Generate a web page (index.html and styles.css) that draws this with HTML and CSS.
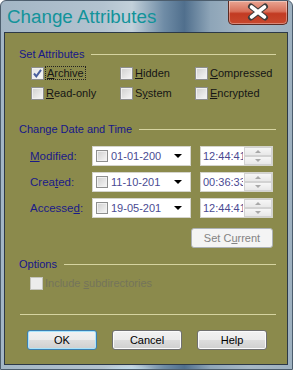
FILE: index.html
```html
<!DOCTYPE html>
<html lang="en">
<head>
<meta charset="UTF-8" />
<title>Change Attributes</title>
<link rel="stylesheet" href="styles.css">
</head>
<body>

<div class="window">
  <!-- Title bar -->
  <div class="titlebar">
    <span class="title">Change Attributes</span>
    <button class="close" aria-label="Close">
      <svg width="60" height="24" viewBox="0 0 60 24">
        <path d="M23 6.5 L37 17.5 M37 6.5 L23 17.5" stroke="#3d3d3d" stroke-width="6" stroke-linecap="round" fill="none"/>
        <path d="M23.5 7 L36.5 17 M36.5 7 L23.5 17" stroke="#fff" stroke-width="3.6" stroke-linecap="round" fill="none"/>
      </svg>
    </button>
  </div>

  <div class="client">
    <!-- Set Attributes -->
    <div class="group-head"><span>Set Attributes</span><i></i></div>
    <div class="attrs">
      <label class="check"><span class="box checked"><svg width="11" height="11" viewBox="0 0 11 11"><path d="M2 5.5 L4.3 8.3 L9 1.8" stroke="#4a5f9e" stroke-width="2" fill="none"/></svg></span><span class="focus"><u>A</u>rchive</span></label>
      <label class="check"><span class="box"></span><span><u>H</u>idden</span></label>
      <label class="check"><span class="box"></span><span><u>C</u>ompressed</span></label>
      <label class="check"><span class="box"></span><span><u>R</u>ead-only</span></label>
      <label class="check"><span class="box"></span><span>S<u>y</u>stem</span></label>
      <label class="check"><span class="box"></span><span><u>E</u>ncrypted</span></label>
    </div>

    <!-- Change Date and Time -->
    <div class="group-head head-dates"><span>Change Date and Time</span><i></i></div>
    <div class="dates">
      <div class="date-row">
        <span class="date-label"><u>M</u>odified:</span>
        <div class="picker"><span class="box small"></span><span class="val">01-01-200</span><span class="arrow"></span></div>
        <div class="timebox"><span class="val">12:44:41</span><span class="spin"><b class="up"></b><b class="down"></b></span></div>
      </div>
      <div class="date-row">
        <span class="date-label">Crea<u>t</u>ed:</span>
        <div class="picker"><span class="box small"></span><span class="val">11-10-201</span><span class="arrow"></span></div>
        <div class="timebox"><span class="val">00:36:33</span><span class="spin"><b class="up"></b><b class="down"></b></span></div>
      </div>
      <div class="date-row">
        <span class="date-label">Accesse<u>d</u>:</span>
        <div class="picker"><span class="box small"></span><span class="val">19-05-201</span><span class="arrow"></span></div>
        <div class="timebox"><span class="val">12:44:41</span><span class="spin"><b class="up"></b><b class="down"></b></span></div>
      </div>
    </div>
    <div class="set-row">
      <button class="btn disabled" disabled>Set C<u>u</u>rrent</button>
    </div>

    <!-- Options -->
    <div class="group-head head-options"><span>Options</span><i></i></div>
    <label class="check include"><span class="box dim"></span><span>Include <u>s</u>ubdirectories</span></label>

    <div class="sep"></div>

    <div class="buttons">
      <button class="btn default">OK</button>
      <button class="btn">Cancel</button>
      <button class="btn">Help</button>
    </div>
  </div>
</div>

</body>
</html>
```

FILE: styles.css
```css
body {
  margin: 0;
  font-family: "Liberation Sans", Arial, sans-serif;
  font-size: 11px;
}
.window {
  width: 293px;
  height: 370px;
  display: flex;
  flex-direction: column;
  box-sizing: border-box;
  border-radius: 6px 6px 0 0;
  background:
    radial-gradient(ellipse 30px 6px at 128px 370px, #bfe2f7, rgba(191,226,247,0) 100%),
    linear-gradient(90deg, #a3b6c5 0%, #b3c3d0 35%, #c2d0da 45%, #6f8ca6 56%, #506f8d 63%, #8ea5b8 72%, #a6b8c6 85%, #9eb1c0 100%);
  border: 1px solid #4c5d6d;
}
.titlebar {
  height: 31px;
  display: flex;
  align-items: flex-start;
}
.title {
  font-size: 18.8px;
  color: #12939a;
  padding: 5px 0 0 6px;
}
.close {
  margin: 0 4px 0 auto;
  width: 60px;
  height: 24px;
  padding: 0;
  border: 1px solid #5b2a22;
  border-top: none;
  border-radius: 0 0 5px 5px;
  background: linear-gradient(#e9a593 0%, #d8705a 45%, #c23a22 55%, #c8492e 100%);
  box-shadow: inset 0 0 0 1px rgba(255,255,255,0.35);
}
.close svg {
  display: block;
  margin: -1px 0 0 -1px;
}

/* Client area */
.client {
  flex: 1;
  margin: 0 4px 4px 3px;
  border: 1px solid #2c3947;
  background: #8b8a4c;
  padding: 14px 11px 0 14px;
}
.group-head {
  display: flex;
  align-items: center;
  height: 14px;
  gap: 7px;
  color: #16168a;
}
.group-head i {
  flex: 1;
  height: 1px;
  background: #d6d4a0;
}
.head-dates {
  margin-top: 19px;
}
.head-options {
  margin-top: 9px;
}

/* Checkboxes */
.attrs {
  margin-top: 2px;
  padding-left: 12px;
  display: grid;
  grid-template-columns: 89px 75px auto;
  grid-auto-rows: 20px;
}
.check {
  display: flex;
  align-items: center;
  gap: 2px;
  color: #151515;
}
.box {
  width: 11px;
  height: 11px;
  border: 1px solid #8e8f8f;
  background: linear-gradient(135deg, #cfcfcf, #f7f7f7);
  box-shadow: inset 0 0 0 1px #f0f0f0;
  display: inline-flex;
  align-items: center;
  justify-content: center;
  flex: none;
}
.box.checked {
  background: linear-gradient(135deg, #e2e2e2, #fafafa);
}
.focus {
  outline: 1px dotted #222;
  padding: 0 1px;
}
.include {
  margin-top: 2px;
  padding-left: 11px;
  height: 20px;
  color: #74745a;
}
.box.dim {
  border-color: #c4c4bc;
  background: #ececec;
  box-shadow: none;
}

/* Date and time */
.dates {
  margin-top: 10px;
  display: flex;
  flex-direction: column;
  gap: 6px;
}
.date-row {
  display: flex;
  align-items: center;
  height: 20px;
  padding-left: 11px;
}
.date-label {
  width: 62px;
  color: #1a1a88;
  font-size: 11.5px;
}
.picker, .timebox {
  height: 20px;
  box-sizing: border-box;
  background: #fff;
  border: 1px solid #d4d4cc;
  display: flex;
  align-items: center;
  color: #4a4a92;
  overflow: hidden;
}
.picker {
  width: 99px;
  padding-left: 3px;
}
.box.small {
  width: 10px;
  height: 10px;
  margin-right: 3px;
}
.picker .val {
  flex: 1;
}
.arrow {
  width: 0;
  height: 0;
  border-left: 4px solid transparent;
  border-right: 4px solid transparent;
  border-top: 4px solid #000;
  margin-right: 8px;
}
.timebox {
  width: 73px;
  margin-left: 9px;
  padding-left: 2px;
}
.timebox .val {
  width: 40px;
  overflow: hidden;
  white-space: nowrap;
  flex: none;
  margin-right: 1px;
}
.spin {
  width: 28px;
  height: 18px;
  display: flex;
  flex-direction: column;
}
.spin b {
  flex: 1;
  border: 1px solid #d2d2d2;
  background: linear-gradient(#f6f6f6, #e8e8e8);
  display: flex;
  align-items: center;
  justify-content: center;
}
.spin b::after {
  content: "";
  border-left: 3px solid transparent;
  border-right: 3px solid transparent;
}
.spin .up::after {
  border-bottom: 3px solid #a8a8a8;
}
.spin .down::after {
  border-top: 3px solid #a8a8a8;
}

/* Buttons */
.set-row {
  margin-top: 10px;
  display: flex;
  justify-content: flex-end;
  padding-right: 3px;
}
.btn {
  height: 20px;
  width: 70px;
  padding: 0;
  font-family: inherit;
  font-size: 11px;
  color: #000;
  border: 1px solid #707070;
  border-radius: 3px;
  background: linear-gradient(#f2f2f2 0%, #ebebeb 50%, #dddddd 51%, #cfcfcf 100%);
  box-shadow: inset 0 0 0 1px #fbfbfb;
}
.btn.disabled {
  width: 82px;
  color: #838383;
  border-color: #adb2b5;
  background: #f4f4f4;
  box-shadow: none;
}
.btn.default {
  border-color: #3c7fb1;
  box-shadow: inset 0 0 0 1px #a9e4fc;
}
.sep {
  margin-top: 21px;
  margin-left: 1px;
  height: 1px;
  background: #d6d4a0;
}
.buttons {
  margin-top: 15px;
  padding-left: 8px;
  display: flex;
  gap: 15px;
}
```
